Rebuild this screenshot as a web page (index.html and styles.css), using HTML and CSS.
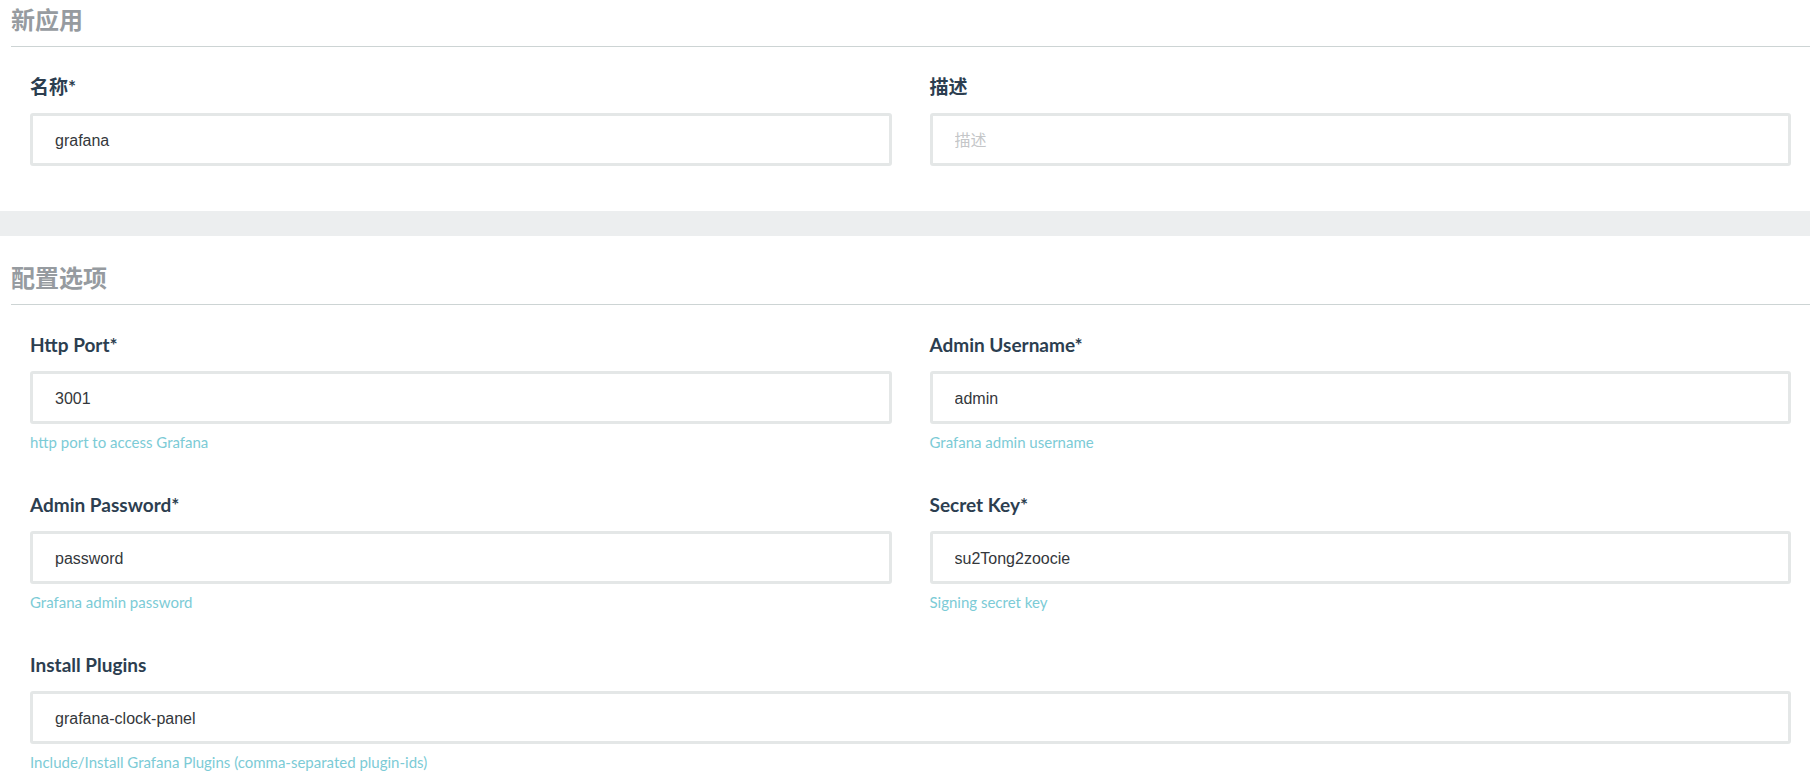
FILE: index.html
```html
<!DOCTYPE html>
<html lang="zh-CN">
<head>
<meta charset="utf-8">
<title>新应用</title>
<link rel="stylesheet" href="styles.css">
</head>
<body>
<div class="page">
  <section class="section section-first">
    <h2 class="section-title">新应用</h2>
    <div class="row">
      <div class="col">
        <div class="field">
          <label class="field-label">名称*</label>
          <input class="field-input" type="text" value="grafana">
        </div>
      </div>
      <div class="col">
        <div class="field">
          <label class="field-label">描述</label>
          <input class="field-input" type="text" placeholder="描述">
        </div>
      </div>
    </div>
  </section>
  <div class="band"></div>
  <section class="section">
    <h2 class="section-title">配置选项</h2>
    <div class="row">
      <div class="col">
        <div class="field">
          <label class="field-label">Http Port*</label>
          <input class="field-input" type="text" value="3001">
          <p class="field-help">http port to access Grafana</p>
        </div>
      </div>
      <div class="col">
        <div class="field">
          <label class="field-label">Admin Username*</label>
          <input class="field-input" type="text" value="admin">
          <p class="field-help">Grafana admin username</p>
        </div>
      </div>
      <div class="col">
        <div class="field">
          <label class="field-label">Admin Password*</label>
          <input class="field-input" type="text" value="password">
          <p class="field-help">Grafana admin password</p>
        </div>
      </div>
      <div class="col">
        <div class="field">
          <label class="field-label">Secret Key*</label>
          <input class="field-input" type="text" value="su2Tong2zoocie">
          <p class="field-help">Signing secret key</p>
        </div>
      </div>
      <div class="col col-full">
        <div class="field">
          <label class="field-label">Install Plugins</label>
          <input class="field-input" type="text" value="grafana-clock-panel">
          <p class="field-help">Include/Install Grafana Plugins (comma-separated plugin-ids)</p>
        </div>
      </div>
    </div>
  </section>
</div>
</body>
</html>
```

FILE: styles.css
```css
html, body {
  margin: 0;
  padding: 0;
  background: #ffffff;
}

body {
  font-family: Lato, "Noto Sans CJK SC", sans-serif;
  color: #2c3e50;
  overflow: hidden;
}

.page {
  width: 1810px;
}

.section {
  padding: 22px 0 5px 11px;
}

.section-first {
  padding-top: 0;
}

.section-title {
  margin: 0;
  padding: 3px 0 9px 0;
  font-size: 24px;
  line-height: 34px;
  font-weight: 700;
  color: #969ba0;
  font-family: Lato, "Noto Sans CJK SC", sans-serif;
  border-bottom: 1px solid #cdd4d4;
}

.row {
  display: grid;
  grid-template-columns: 1fr 1fr;
  padding-top: 27px;
}

.col {
  padding: 0 19px;
}

.col-full {
  grid-column: 1 / span 2;
}

.field {
  display: flex;
  flex-direction: column;
  margin-bottom: 40px;
}

.field-label {
  font-size: 19px;
  line-height: 26px;
  font-weight: 700;
  color: #2c3e50;
  margin-bottom: 13px;
  font-family: Lato, "Noto Sans CJK SC", sans-serif;
}

.field-input {
  box-sizing: border-box;
  height: 53px;
  width: 100%;
  margin: 0;
  border: 3px solid #e4e7e7;
  border-radius: 3px;
  padding: 3px 22px 0 22px;
  font-family: "Liberation Sans", "Noto Sans CJK SC", sans-serif;
  font-size: 16px;
  color: #34373b;
  background: #ffffff;
  outline: none;
}

.field-input::placeholder {
  color: #c4c6c8;
}

.field-help {
  margin: 8px 0 0 0;
  font-size: 15px;
  line-height: 20px;
  color: #7ccbd6;
  font-family: Lato, sans-serif;
}

.band {
  height: 25px;
  background: #eceeef;
}
```
